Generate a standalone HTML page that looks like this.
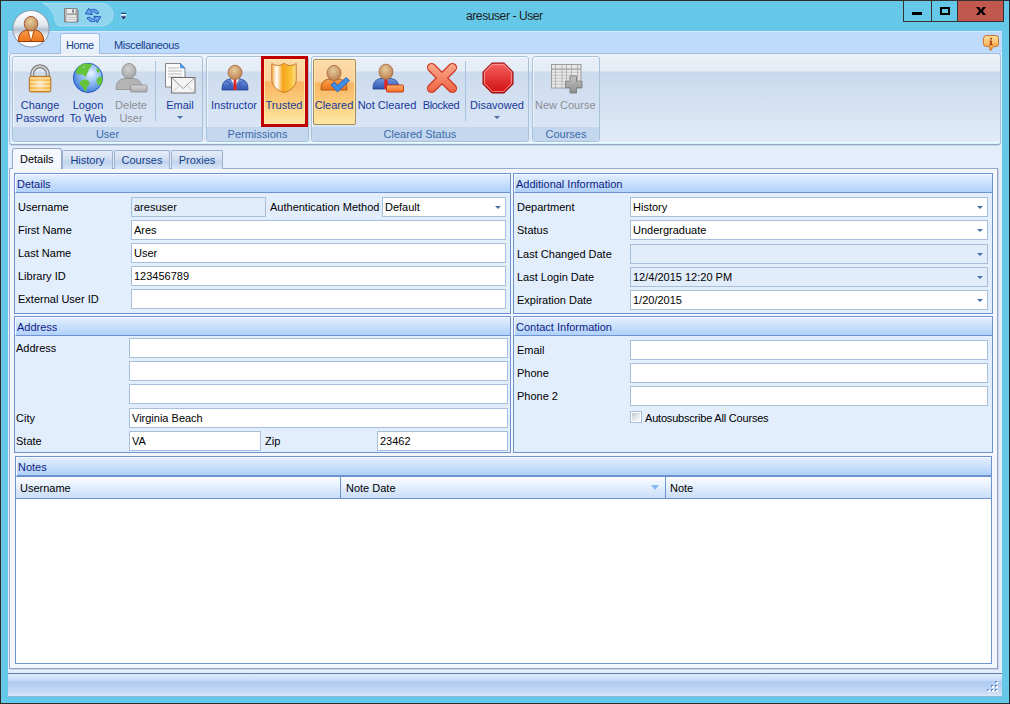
<!DOCTYPE html>
<html><head><meta charset="utf-8">
<style>
*{box-sizing:border-box;margin:0;padding:0}
html,body{width:1010px;height:704px;overflow:hidden}
body{position:relative;background:#65c8e8;font-family:"Liberation Sans",sans-serif;font-size:11px;color:#000}
.a{position:absolute}
.t{position:absolute;white-space:nowrap;line-height:13px;font-size:11px}
#frame{left:0;top:0;width:1010px;height:704px;border:1px solid #2b2b2b;background:#65c8e8}
#content{left:8px;top:31px;width:994px;height:665px;background:#e3edfb}
.wbtn{top:0;height:22px;border:1px solid #333;background:#65c8e8}
.rtab{color:#15428b}
#ribbon{left:9px;top:53px;width:992px;height:92px;border:1px solid #a3bfe3;border-bottom-color:#93a6c2;border-radius:3px;box-shadow:inset 0 -1px 0 #cff5fc,inset 0 -2px 0 #f6f9fd,0 1px 0 #c6d3e5;background:linear-gradient(#eef2f8 0,#e4ebf5 17px,#c9d9ed 18px,#e1ecf9 100%)}
.grp{top:56px;height:86px;border:1px solid #a9c1d9;box-shadow:inset 1px 1px 0 rgba(255,255,255,.6);border-radius:3px;background:linear-gradient(#e9eff8 0,#e4ecf6 14px,#cddbee 15px,#dce8f7 100%)}
.glab{position:absolute;left:0;right:0;bottom:0;height:14px;background:#c3d7ef;text-align:center;color:#3d6aaa;line-height:15px;border-radius:0 0 2px 2px}
.bt{position:absolute;text-align:center;color:#17399a;line-height:13px;white-space:nowrap}
.dis{color:#8d8e94}
.sep{position:absolute;top:61px;width:1px;height:60px;background:#a9c2e0}
#tabpage{left:9px;top:168px;width:989px;height:501px;border:1px solid #97aacb;border-right-color:#91a3c4;border-bottom-color:#91a3c4;box-shadow:1px 1px 0 #c9d5e6;background:#f3f7fd}
.ptab{top:150px;height:19px;border:1px solid #9db1cf;border-bottom:none;border-radius:2px 2px 0 0;background:linear-gradient(#e4ecf8 0,#d4e1f3 40%,#c0d4ee 60%,#d8e5f6 100%);color:#15428b;text-align:center;line-height:19px}
.gb{position:absolute;border:1px solid #6c93cf;background:#e3eefd}
.gh{position:absolute;left:0;right:0;top:0;height:19px;background:linear-gradient(#e2eefe,#b0d1fa);border-bottom:1px solid #6c93cf;border-top:1px solid #fbfdff;border-left:1px solid #fbfdff;color:#0e1d84;padding-left:1px;line-height:19px}
.inp{position:absolute;height:20px;border:1px solid #a8bfdc;background:#fff;padding:0 0 0 2px;line-height:18px;white-space:nowrap}
.ro{background:#e2edfc}
.dd:after{content:"";position:absolute;right:4px;top:8px;border-left:3px solid transparent;border-right:3px solid transparent;border-top:3px solid #4a6fa5}
#status{left:8px;top:673px;width:994px;height:23px;border-top:1px solid #5d7fb3;box-shadow:0 1px 0 #86b9d0;background:linear-gradient(#dce9fa 0,#c8dcf6 6px,#aecbf1 8px,#c6daf5 18px,#d9e7f9 100%)}
</style></head><body>
<div class="a" id="frame"></div>
<!-- quick access bar -->
<svg class="a" style="left:0;top:0" width="140" height="31">
 <defs><linearGradient id="flop" x1="0" y1="0" x2="1" y2="1"><stop offset="0" stop-color="#c0c0c0"/><stop offset="1" stop-color="#8e8e8e"/></linearGradient></defs>
 <path d="M43 3.5 H102 A11.2 11.2 0 0 1 102 25.9 H59 C57 25.5 56 23 55 20 C54 14 50 6 43 3.5Z" fill="#8fd5ee" stroke="#a3ddf1" stroke-width="1"/>
 <!-- save -->
 <path d="M64.5 8.5 H76.5 L78 10 V22 H64.5Z" fill="url(#flop)" stroke="#7c7c7c" stroke-width="0.9"/>
 <rect x="67" y="9" width="8.5" height="4.2" fill="#ececec"/>
 <rect x="72.3" y="9.6" width="1.6" height="3" fill="#6a6a6a"/>
 <rect x="66.6" y="15.2" width="9.8" height="6.3" fill="#eeeeee"/>
 <path d="M67.5 17.3 H75.5 M67.5 19.3 H75.5" stroke="#b4b4b4" stroke-width="0.8"/>
 <!-- refresh -->
 <path d="M85.3 13.8 L88.8 8.3 L89.6 10.4 C93 8.2 97 9.3 99 13 L96.2 13.8 C95 11.6 92.8 11.2 91 12.4 L92.3 14.6Z" fill="#6aa6f0" stroke="#1b4db0" stroke-width="0.9" stroke-linejoin="round"/>
 <path d="M100.7 16.8 L97.2 22.6 L96.4 20.5 C93 22.7 89 21.6 87 17.9 L89.8 17.1 C91 19.3 93.2 19.7 95 18.5 L93.7 16.3Z" fill="#6aa6f0" stroke="#1b4db0" stroke-width="0.9" stroke-linejoin="round"/>
 <!-- qat dropdown -->
 <rect x="121" y="12.8" width="5.2" height="1.1" fill="#15306e"/>
 <rect x="121" y="14" width="5.2" height="1.3" fill="#fff"/>
 <path d="M120.3 16 H126.9 L123.6 20Z" fill="#15306e" stroke="#fff" stroke-width="0.5"/>
</svg>
<div class="t" style="left:466px;top:9px;font-size:12px;line-height:14px;color:#1e1e1e;letter-spacing:-0.4px">aresuser - User</div>
<div class="a wbtn" style="left:903px;width:29px"></div>
<div class="a wbtn" style="left:931px;width:27px"></div>
<div class="a wbtn" style="left:957px;width:47px;background:#c1584e"></div>
<div class="a" style="left:912px;top:12px;width:10px;height:3px;background:#000"></div>
<div class="a" style="left:940px;top:7px;width:10px;height:8px;border:2px solid #000"></div>
<svg class="a" style="left:970px;top:0px" width="20" height="20"><path d="M6 7 H9.2 L11 9.8 L12.8 7 H16 L12.9 11 L16 15 H12.8 L11 12.2 L9.2 15 H6 L9.1 11Z" fill="#000"/></svg>

<div class="a" id="content"></div>
<div class="a" style="left:8px;top:31px;width:994px;height:22px;background:#bfdbfc;border-top:1px solid #d5e8fd"></div>
<!-- avatar -->
<svg class="a" style="left:10px;top:8px" width="44" height="44">
 <defs>
  <linearGradient id="av" x1="0" y1="0" x2="0" y2="1"><stop offset="0" stop-color="#ffffff"/><stop offset="0.4" stop-color="#e4e8ef"/><stop offset="0.52" stop-color="#b4c0d0"/><stop offset="0.7" stop-color="#eef1f5"/><stop offset="1" stop-color="#ffffff"/></linearGradient>
  <radialGradient id="head" cx="0.45" cy="0.35" r="0.6"><stop offset="0" stop-color="#e8cfa0"/><stop offset="1" stop-color="#c08a5c"/></radialGradient>
  <linearGradient id="orb" x1="0" y1="0" x2="0" y2="1"><stop offset="0" stop-color="#f59a4a"/><stop offset="1" stop-color="#ef7419"/></linearGradient>
 </defs>
 <circle cx="21" cy="20.8" r="18.2" fill="url(#av)" stroke="#7f8da3" stroke-width="0.9"/>
 <path d="M8.3 33.5 C8.3 25.5 12 23.2 16.5 22 L25.5 22 C30 23.2 33.7 25.5 33.7 33.5Z" fill="url(#orb)" stroke="#983c0c" stroke-width="1"/>
 <path d="M17.5 22.2 L21 33 M24.5 22.2 L21 33" stroke="#983c0c" stroke-width="0.6"/>
 <path d="M19 23 L23 23 L21 32Z" fill="#fff"/>
 <ellipse cx="21" cy="15.7" rx="6.8" ry="7.3" fill="url(#head)" stroke="#9c5030" stroke-width="0.9"/>
</svg>
<!-- ribbon tabs -->
<div class="a" style="left:60px;top:33px;width:40px;height:21px;border:1px solid #9ebde4;border-bottom:none;border-radius:3px 3px 0 0;background:linear-gradient(#f6f9fe,#e4edf9)"></div>
<div class="t rtab" style="left:66px;top:39px;letter-spacing:-0.4px">Home</div>
<div class="t rtab" style="left:114px;top:39px;letter-spacing:-0.35px">Miscellaneous</div>
<!-- info icon -->
<svg class="a" style="left:982px;top:34px" width="18" height="18">
 <defs><linearGradient id="inf" x1="0" y1="0" x2="0" y2="1"><stop offset="0" stop-color="#fde0a0"/><stop offset="1" stop-color="#f39a30"/></linearGradient></defs>
 <path d="M4.5 1.5 H14 Q16.5 1.5 16.5 4.5 V9.8 Q16.5 12.5 14 12.5 H11.5 L8.5 16.8 L7.2 12.5 H4.5 Q1.5 12.5 1.5 9.8 V4.5 Q1.5 1.5 4.5 1.5Z" fill="url(#inf)" stroke="#c8641e" stroke-width="0.9"/>
 <rect x="8.2" y="3.8" width="1.8" height="1.8" fill="#b04a1c"/>
 <path d="M7.4 6.6 H10 V10.2 H10.8 V11.2 H7.2 V10.2 H8 V7.6 H7.4Z" fill="#b04a1c"/>
</svg>

<div class="a" id="ribbon"></div>
<div class="a" style="left:61px;top:53px;width:38px;height:1px;background:#ebf0f8"></div>
<!-- groups -->
<div class="a grp" style="left:12px;width:191px"><div class="glab">User</div></div>
<div class="a grp" style="left:206px;width:103px"><div class="glab">Permissions</div></div>
<div class="a grp" style="left:311px;width:218px"><div class="glab">Cleared Status</div></div>
<div class="a grp" style="left:532px;width:68px"><div class="glab">Courses</div></div>
<div class="sep" style="left:155px"></div>
<div class="sep" style="left:465px"></div>

<!-- Trusted highlight -->
<div class="a" style="left:261px;top:56px;width:47px;height:71px;border:3px solid #c00000;box-shadow:inset 0 0 0 1px #fde6a6;background:linear-gradient(#fcdcaa 0,#fbd198 22px,#f8b462 23px,#fbcf7f 45px,#fde8a6 100%)"></div>
<!-- Cleared highlight -->
<div class="a" style="left:313px;top:59px;width:43px;height:66px;border:1px solid #a88a55;border-radius:2px;box-shadow:inset 0 0 0 1px #fde7a8;background:linear-gradient(#fcdcaa 0,#fbd198 22px,#f8b462 23px,#fbcf7f 45px,#fde8a6 100%)"></div>

<svg class="a" style="left:0;top:54px" width="620" height="46">
 <defs>
  <linearGradient id="lockb" x1="0" y1="0" x2="0" y2="1">
   <stop offset="0" stop-color="#f5a623"/><stop offset="0.12" stop-color="#fde9b0"/><stop offset="0.25" stop-color="#f6a521"/><stop offset="0.37" stop-color="#fde9b0"/><stop offset="0.5" stop-color="#f6a521"/><stop offset="0.62" stop-color="#fde9b0"/><stop offset="0.75" stop-color="#f6a521"/><stop offset="0.87" stop-color="#fde9b0"/><stop offset="1" stop-color="#f2a01e"/>
  </linearGradient>
  <radialGradient id="lockhl" cx="0.5" cy="0.5" r="0.5"><stop offset="0" stop-color="#fff" stop-opacity="0.75"/><stop offset="0.6" stop-color="#fff" stop-opacity="0.25"/><stop offset="1" stop-color="#fff" stop-opacity="0"/></radialGradient>
  <radialGradient id="glob" cx="0.6" cy="0.35" r="0.7"><stop offset="0" stop-color="#e8f2ff"/><stop offset="0.5" stop-color="#8ab8f0"/><stop offset="1" stop-color="#3b78d8"/></radialGradient>
  <radialGradient id="hd" cx="0.45" cy="0.35" r="0.6"><stop offset="0" stop-color="#e6cc9c"/><stop offset="1" stop-color="#c08658"/></radialGradient>
  <radialGradient id="hdg" cx="0.45" cy="0.35" r="0.6"><stop offset="0" stop-color="#d0d0d0"/><stop offset="1" stop-color="#a8a8a8"/></radialGradient>
  <linearGradient id="suit" x1="0" y1="0" x2="0" y2="1"><stop offset="0" stop-color="#7196e0"/><stop offset="1" stop-color="#2f55b0"/></linearGradient>
  <linearGradient id="osuit" x1="0" y1="0" x2="0" y2="1"><stop offset="0" stop-color="#f7a050"/><stop offset="1" stop-color="#ec7216"/></linearGradient>
  <linearGradient id="shield" x1="0" y1="0" x2="1" y2="0"><stop offset="0" stop-color="#f6b048"/><stop offset="0.2" stop-color="#ffffff"/><stop offset="0.45" stop-color="#f7a51c"/><stop offset="0.8" stop-color="#fbc43a"/><stop offset="1" stop-color="#fde59a"/></linearGradient>
  <linearGradient id="xg" x1="0" y1="0" x2="0" y2="1"><stop offset="0" stop-color="#fba088"/><stop offset="1" stop-color="#ee5c3e"/></linearGradient>
  <linearGradient id="xg2" gradientUnits="userSpaceOnUse" x1="0" y1="9" x2="0" y2="39"><stop offset="0" stop-color="#fcab90"/><stop offset="1" stop-color="#ef6040"/></linearGradient>
  <linearGradient id="plusg" x1="0" y1="0" x2="0" y2="1"><stop offset="0" stop-color="#c4c4c4"/><stop offset="1" stop-color="#8c8c8c"/></linearGradient>
  <linearGradient id="stop" x1="0" y1="0" x2="0" y2="1"><stop offset="0" stop-color="#f76060"/><stop offset="1" stop-color="#d01010"/></linearGradient>
  <linearGradient id="mb" x1="0" y1="0" x2="0" y2="1"><stop offset="0" stop-color="#fbb070"/><stop offset="1" stop-color="#f07020"/></linearGradient>
  <linearGradient id="mbg" x1="0" y1="0" x2="0" y2="1"><stop offset="0" stop-color="#d8d8d8"/><stop offset="1" stop-color="#a8a8a8"/></linearGradient>
 </defs>
 <!-- lock (y offset 54) -->
 <path d="M32.2 23.5 V20 A7.8 7.8 0 0 1 47.8 20 V23.5" fill="none" stroke="#7d7d7d" stroke-width="4"/>
 <path d="M32.2 23.5 V20 A7.8 7.8 0 0 1 47.8 20 V23.5" fill="none" stroke="#dcdcdc" stroke-width="1.6"/>
 <rect x="29.3" y="22.3" width="21.5" height="15.6" rx="1.8" fill="url(#lockb)" stroke="#b0601c" stroke-width="0.9"/>
 <rect x="30" y="23" width="20" height="14.5" fill="url(#lockhl)"/>
 <!-- globe -->
 <circle cx="88" cy="23.85" r="14.6" fill="url(#glob)" stroke="#2457c0" stroke-width="1"/>
 <path d="M75.8 19 C76 14 80 10.5 84 9.8 C87 9.2 90 9.5 92.3 10.5 C91 12 90.5 13.5 89.5 14.5 C88.5 15.5 88.8 17 88 18 C87 19 86.5 21 85.8 23.5 C84.5 22 83.5 20.5 82 20.5 C80 20.5 78 20.5 75.8 19Z" fill="#63c43a"/>
 <path d="M79.5 29.5 C80 26.5 82.5 25.5 85 25.6 C88 25.8 89.6 27.5 89.5 29.5 C89.3 31.5 87 32 86.8 34 C86.6 35.5 86.5 37 86.2 38 C84.5 37.5 83.5 35 82.5 33 C81.5 31.5 79.8 31 79.5 29.5Z" fill="#63c43a"/>
 <path d="M97 25 C98.5 22.5 101 22 102.3 22.8 C102.8 26 102 29 100.5 31.5 C98.5 31 97 29.5 96.6 28 C96.4 27 96.6 26 97 25Z" fill="#63c43a"/>
 <path d="M96.5 14.5 C97.5 14 99 15 100 17 C99.5 18.5 98.5 19 97.5 18.5 C96.5 17.5 96.3 16 96.5 14.5Z" fill="#63c43a"/>
 <path d="M83 12.5 C84 12 85 12.5 85 13.5 C84 14 83 13.8 83 12.5Z" fill="#9ad8c0"/>
 <!-- delete user gray -->
 <path d="M116 35.5 C116 28 119 25.5 124 24.5 H134 C139 25.5 142 28 142 35.5Z" fill="#b4b4b4" stroke="#8e8e8e" stroke-width="0.8"/>
 <ellipse cx="129" cy="17" rx="7" ry="7.6" fill="url(#hdg)" stroke="#8e8e8e" stroke-width="0.8"/>
 <rect x="130.5" y="31" width="16.5" height="7" rx="1" fill="url(#mbg)" stroke="#8a8a8a" stroke-width="0.8"/>
 <!-- email -->
 <path d="M165.5 9.5 H180.5 L185 14 V33 H165.5Z" fill="#fafafa" stroke="#7a7a7a" stroke-width="0.9"/>
 <path d="M180.5 9.5 L185 14 H180.5Z" fill="#5aa8f0" stroke="#2a70c8" stroke-width="0.6"/>
 <path d="M168 14 H179 M168 17 H182 M168 20 H182 M168 23 H182" stroke="#b8b8b8" stroke-width="1"/>
 <rect x="171.5" y="23.5" width="23.5" height="15.5" fill="#f4f4f4" stroke="#6e6e6e" stroke-width="1"/>
 <path d="M172 24 L183.2 34.5 L194.5 24" fill="none" stroke="#9a9a9a" stroke-width="1"/>
 <path d="M172 38.5 L180 31 M194.5 38.5 L186.5 31" stroke="#c0c0c0" stroke-width="0.8"/>
 <!-- instructor -->
 <path d="M222 36 C222 28 225 26 230 25 H240 C245 26 248 28 248 36Z" fill="url(#suit)" stroke="#243f8a" stroke-width="0.8"/>
 <path d="M231 25 H239 L235 33Z" fill="#fff"/>
 <path d="M233.8 25.5 H236.2 L236.8 36 H233.2Z" fill="#e02828"/>
 <path d="M226 27 L231 30 L229 33 M244 27 L239 30 L241 33" fill="none" stroke="#2a4a9a" stroke-width="0.7"/>
 <ellipse cx="235" cy="18.5" rx="7" ry="7.2" fill="url(#hd)" stroke="#a5643a" stroke-width="0.8"/>
 <!-- shield -->
 <path d="M271.8 9.5 C274 11.5 278 12 281 11 C282.5 10.3 283.3 9.5 284 9.3 C284.7 9.5 285.5 10.3 287 11 C290 12 294 11.5 296.2 9.5 V26 C296 32 291 36.5 284 38.5 C277 36.5 272 32 271.8 26Z" fill="url(#shield)" stroke="#c27020" stroke-width="0.9"/>
 <!-- cleared -->
 <path d="M321 36 C321 28 324 26 329 25 H339 C344 26 347 28 347 36Z" fill="url(#osuit)" stroke="#a04a10" stroke-width="0.8"/>
 <ellipse cx="334" cy="19" rx="7" ry="7.6" fill="url(#hd)" stroke="#a5643a" stroke-width="0.8"/>
 <path d="M331 31 L334.5 28 L337.5 31.5 L346 23.5 L349.5 26.5 L337.5 38Z" fill="#3e8ee6" stroke="#1f5cb8" stroke-width="0.8"/>
 <!-- not cleared -->
 <path d="M373 35 C373 27.5 376 25.5 381 24.5 H391 C396 25.5 399 27.5 399 35Z" fill="url(#suit)" stroke="#243f8a" stroke-width="0.8"/>
 <path d="M384.5 25 H387.5 L388 35 H384Z" fill="#e02828"/>
 <ellipse cx="386" cy="17.8" rx="7" ry="7.6" fill="url(#hd)" stroke="#a5643a" stroke-width="0.8"/>
 <rect x="386.5" y="31" width="17" height="7" rx="1" fill="url(#mb)" stroke="#c83010" stroke-width="0.9"/>
 <!-- blocked X -->
 <path d="M431.6 13.6 L452.4 34.4 M452.4 13.6 L431.6 34.4" stroke="#cf3b26" stroke-width="9.4" stroke-linecap="round"/>
 <path d="M431.6 13.6 L452.4 34.4 M452.4 13.6 L431.6 34.4" stroke="url(#xg2)" stroke-width="7" stroke-linecap="round"/>
 <!-- stop -->
 <path d="M491.8 9 H504.2 L513 17.8 V30.2 L504.2 39 H491.8 L483 30.2 V17.8Z" fill="url(#stop)" stroke="#8a0606" stroke-width="1"/>
 <path d="M492.4 10.6 H503.6 L511.4 18.4 V29.6 L503.6 37.4 H492.4 L484.6 29.6 V18.4Z" fill="none" stroke="#ffa0a0" stroke-width="0.8"/>
 <!-- new course gray -->
 <rect x="551.5" y="10.5" width="29.5" height="23.5" fill="#e8e8e8" stroke="#9c9c9c" stroke-width="1"/>
 <path d="M552 15.3 H581 M552 18.3 H581 M552 21.3 H581 M552 24.3 H581 M552 27.3 H581 M552 30.3 H581" stroke="#b8b8b8" stroke-width="0.7"/>
 <path d="M552 15 H581" stroke="#a0a0a0" stroke-width="1"/>
 <path d="M555.5 10.5 V34 M562 10.5 V34 M566.5 10.5 V34 M571.5 10.5 V34 M577.5 10.5 V34" stroke="#a8a8a8" stroke-width="0.8"/>
 <path d="M570 22 H576.5 V27.2 H582 V33.7 H576.5 V39 H570 V33.7 H565.5 V27.2 H570Z" fill="url(#plusg)" stroke="#7e7e7e" stroke-width="0.9" stroke-linejoin="round"/>
</svg>

<!-- button labels -->
<div class="bt" style="left:10px;width:60px;top:99px">Change</div>
<div class="bt" style="left:10px;width:60px;top:112px">Password</div>
<div class="bt" style="left:58px;width:60px;top:99px">Logon</div>
<div class="bt" style="left:58px;width:60px;top:112px">To Web</div>
<div class="bt dis" style="left:101px;width:60px;top:99px">Delete</div>
<div class="bt dis" style="left:101px;width:60px;top:112px">User</div>
<div class="bt" style="left:150px;width:60px;top:99px">Email</div>
<div class="a" style="left:177px;top:116px;border-left:3px solid transparent;border-right:3px solid transparent;border-top:3px solid #4a6fa5"></div>
<div class="bt" style="left:204px;width:60px;top:99px">Instructor</div>
<div class="bt" style="left:254px;width:60px;top:99px">Trusted</div>
<div class="bt" style="left:304px;width:60px;top:99px">Cleared</div>
<div class="bt" style="left:357px;width:60px;top:99px">Not Cleared</div>
<div class="bt" style="left:411px;width:60px;top:99px;letter-spacing:-0.4px">Blocked</div>
<div class="bt" style="left:467px;width:60px;top:99px">Disavowed</div>
<div class="a" style="left:494px;top:116px;border-left:3px solid transparent;border-right:3px solid transparent;border-top:3px solid #4a6fa5"></div>
<div class="bt dis" style="left:535px;width:60px;top:99px">New Course</div>

<!-- tabs -->
<div class="a" id="tabpage"></div>
<div class="a ptab" style="left:62px;width:51px">History</div>
<div class="a ptab" style="left:114px;width:56px">Courses</div>
<div class="a ptab" style="left:171px;width:52px">Proxies</div>
<div class="a" style="left:12px;top:148px;width:50px;height:21px;border:1px solid #97aacb;border-bottom:none;border-radius:3px 3px 0 0;background:#f4f8fe"></div>
<div class="t" style="left:20px;top:153px">Details</div>

<!-- Details group -->
<div class="gb" style="left:14px;top:173px;width:497px;height:141px"><div class="gh">Details</div></div>
<div class="t" style="left:18px;top:201px">Username</div>
<div class="t" style="left:18px;top:224px">First Name</div>
<div class="t" style="left:18px;top:247px">Last Name</div>
<div class="t" style="left:18px;top:270px">Library ID</div>
<div class="t" style="left:18px;top:293px">External User ID</div>
<div class="inp ro" style="left:131px;top:197px;width:135px">aresuser</div>
<div class="t" style="left:270px;top:201px">Authentication Method</div>
<div class="inp dd" style="left:382px;top:197px;width:124px">Default</div>
<div class="inp" style="left:131px;top:220px;width:375px">Ares</div>
<div class="inp" style="left:131px;top:243px;width:375px">User</div>
<div class="inp" style="left:131px;top:266px;width:375px">123456789</div>
<div class="inp" style="left:131px;top:289px;width:375px"></div>

<!-- Additional Information -->
<div class="gb" style="left:513px;top:173px;width:480px;height:141px"><div class="gh">Additional Information</div></div>
<div class="t" style="left:517px;top:201px">Department</div>
<div class="t" style="left:517px;top:224px">Status</div>
<div class="t" style="left:517px;top:248px">Last Changed Date</div>
<div class="t" style="left:517px;top:271px">Last Login Date</div>
<div class="t" style="left:517px;top:294px">Expiration Date</div>
<div class="inp dd" style="left:630px;top:197px;width:358px">History</div>
<div class="inp dd" style="left:630px;top:220px;width:358px">Undergraduate</div>
<div class="inp dd ro" style="left:630px;top:244px;width:358px"></div>
<div class="inp dd ro" style="left:630px;top:267px;width:358px">12/4/2015 12:20 PM</div>
<div class="inp dd" style="left:630px;top:290px;width:358px">1/20/2015</div>

<!-- Address -->
<div class="gb" style="left:14px;top:316px;width:497px;height:137px"><div class="gh">Address</div></div>
<div class="t" style="left:16px;top:342px">Address</div>
<div class="t" style="left:16px;top:412px">City</div>
<div class="t" style="left:16px;top:435px">State</div>
<div class="t" style="left:265px;top:435px">Zip</div>
<div class="inp" style="left:129px;top:338px;width:379px"></div>
<div class="inp" style="left:129px;top:361px;width:379px"></div>
<div class="inp" style="left:129px;top:384px;width:379px"></div>
<div class="inp" style="left:129px;top:408px;width:379px">Virginia Beach</div>
<div class="inp" style="left:129px;top:431px;width:132px">VA</div>
<div class="inp" style="left:377px;top:431px;width:131px">23462</div>

<!-- Contact -->
<div class="gb" style="left:513px;top:316px;width:480px;height:137px"><div class="gh">Contact Information</div></div>
<div class="t" style="left:517px;top:344px">Email</div>
<div class="t" style="left:517px;top:367px">Phone</div>
<div class="t" style="left:517px;top:390px">Phone 2</div>
<div class="inp" style="left:630px;top:340px;width:358px"></div>
<div class="inp" style="left:630px;top:363px;width:358px"></div>
<div class="inp" style="left:630px;top:386px;width:358px"></div>
<div class="a" style="left:630px;top:411px;width:12px;height:12px;border:1px solid #aabfdc;background:#fff"><div class="a" style="left:1px;top:1px;width:8px;height:8px;background:linear-gradient(135deg,#c3c8d0,#e6e8ec 55%,#fbfbfc)"></div></div>
<div class="t" style="left:645px;top:412px;letter-spacing:-0.2px">Autosubscribe All Courses</div>

<!-- Notes -->
<div class="gb" style="left:15px;top:456px;width:977px;height:208px;background:#fff"><div class="gh" style="height:20px;border-bottom-width:2px">Notes</div></div>
<div class="a" style="left:16px;top:477px;width:975px;height:22px;border-bottom:1px solid #6c93cf;background:linear-gradient(#fbfdff,#c9ddf8)"></div>
<div class="a" style="left:340px;top:477px;width:1px;height:21px;background:#6c93cf"></div>
<div class="a" style="left:665px;top:477px;width:1px;height:21px;background:#6c93cf"></div>
<div class="t" style="left:20px;top:482px">Username</div>
<div class="t" style="left:346px;top:482px">Note Date</div>
<div class="t" style="left:670px;top:482px">Note</div>
<div class="a" style="left:651px;top:485px;border-left:4.5px solid transparent;border-right:4.5px solid transparent;border-top:5px solid #8ab8f5"></div>

<div class="a" id="status"></div>
<svg class="a" style="left:985px;top:679px" width="16" height="16">
 <g fill="#5a88c8"><rect x="10" y="2" width="2" height="2"/><rect x="6" y="6" width="2" height="2"/><rect x="10" y="6" width="2" height="2"/><rect x="2" y="10" width="2" height="2"/><rect x="6" y="10" width="2" height="2"/><rect x="10" y="10" width="2" height="2"/></g>
 <g fill="#fff"><rect x="11" y="3" width="2" height="2"/><rect x="7" y="7" width="2" height="2"/><rect x="11" y="7" width="2" height="2"/><rect x="3" y="11" width="2" height="2"/><rect x="7" y="11" width="2" height="2"/><rect x="11" y="11" width="2" height="2"/></g>
</svg>
</body></html>
